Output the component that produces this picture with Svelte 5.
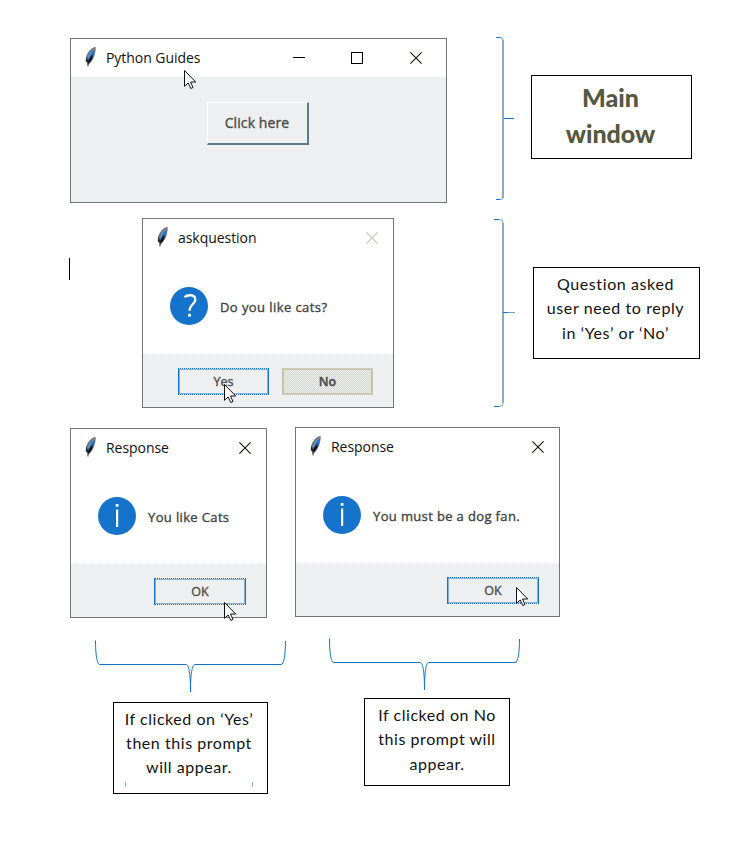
<script>
  const windows = [
    { kind: 'main', title: 'Python Guides', x: 70, y: 38, w: 377, h: 165 },
    { kind: 'ask', title: 'askquestion', x: 142, y: 218, w: 252, h: 190, icon: '?', message: 'Do you like cats?', buttons: ['Yes', 'No'] },
    { kind: 'reply', title: 'Response', x: 70, y: 428, w: 197, h: 190, icon: 'i', message: 'You like Cats', buttons: ['OK'] },
    { kind: 'reply', title: 'Response', x: 295, y: 427, w: 265, h: 190, icon: 'i', message: 'You must be a dog fan.', buttons: ['OK'] }
  ];

  const notes = [
    { kind: 'heading', x: 531, y: 75, w: 161, h: 84, lines: ['Main', 'window'] },
    { kind: 'tall', x: 533, y: 267, w: 167, h: 92, lines: ['Question asked', 'user need to reply', 'in ‘Yes’ or ‘No’'] },
    { kind: 'ticks', x: 113, y: 702, w: 155, h: 92, lines: ['If clicked on ‘Yes’', 'then this prompt', 'will appear.'] },
    { kind: 'plain', x: 364, y: 698, w: 146, h: 88, lines: ['If clicked on No', 'this prompt will', 'appear.'] }
  ];

  const cursors = [[184, 70], [224, 384], [224, 602], [516, 587]];

  const box = (o) => `left:${o.x}px;top:${o.y}px;width:${o.w}px;height:${o.h}px`;
</script>

<main class="canvas">
  {#each windows as win}
    <section class="window {win.kind}" style={box(win)}>
      <header>
        <svg class="feather" width="14" height="20" viewBox="0 0 14 20">
          <path d="M11.500 0C7.500 .5 3.500 5 2.300 9.500L1.500 14L3 16L3.300 19.500L4.500 19.500L5 17C9 14 11.500 7.500 11.700 1Z" fill="#707173" />
          <path d="M10.200 2.500C7 4.500 4.500 8.500 4 13L6.500 13L9 9L10.200 5.500Z" fill="#1976d2" />
          <path d="M8.500 7.500L6.500 10L4.500 13L4 17.500L6 15L8.500 11Z" fill="#050c16" />
          <path d="M2.700 9L2 13.500L4 16L5 13L3.600 13Z" fill="#17222d" />
          <path d="M10.300 1.500L6.500 6L4.200 11" stroke="#8db4d8" stroke-width=".7" fill="none" />
        </svg>
        <span class="title">{win.title}</span>
        <div class="controls">
          {#if win.kind === 'main'}
            <svg class="minimize" width="12" height="12"><path d="M0 5.500H12" stroke="#000" /></svg>
            <svg width="12" height="12"><rect x=".5" y=".5" width="11" height="11" fill="none" stroke="#000" /></svg>
          {/if}
          <svg width="12" height="12"><path class="cross" d="M.4 .4L11.600 11.600M11.600 .4L.4 11.600" /></svg>
        </div>
      </header>
      {#if win.kind === 'main'}
        <div class="body"><button class="raised">Click here</button></div>
      {:else}
        <div class="message">
          <span class="badge">
            <svg width="38" height="38" viewBox="0 0 38 38">
              <circle cx="19" cy="19" r="19" fill="#1573cc" />
              {#if win.icon === 'i'}
                <path d="M17.700 7H20.500V9.700H17.700ZM18 12.500H20.200V30H18Z" fill="#fff" />
              {:else}
                <path d="M14.500 10.300C16.500 8 25.300 6.300 25.300 12.700C25.300 17.300 19.500 17.500 19.500 23.800" stroke="#fff" stroke-width="2.300" fill="none" />
                <path d="M18.100 26.800H21V29.600H18.100Z" fill="#fff" />
              {/if}
            </svg>
          </span>
          <span class="words">{win.message}</span>
        </div>
        <footer>
          {#each win.buttons as label}
            <button class="choice" class:muted={label === 'No'}>{label}</button>
          {/each}
        </footer>
      {/if}
    </section>
  {/each}

  {#each notes as note}
    <aside class="note {note.kind}" style={box(note)}>
      {#each note.lines as line}<span>{line}</span>{/each}
      {#if note.kind === 'ticks'}<i></i>{/if}
    </aside>
  {/each}

  <svg class="braces" width="738" height="842" viewBox="0 0 738 842" fill="none">
    <g stroke="#86add0" stroke-width="2">
      <path d="M503 40V198M503 223V403" />
    </g>
    <g stroke="#1573c5">
      <path d="M496 37.500H500M496 199.500H500M504 118.500H514" />
      <path d="M494 219.500H499M494 406.500H499M503 312.500H508" />
      <path d="M95.500 640.500C95.500 654 97 664.500 99.500 664.500H186C189 664.500 190.500 674 190.500 692C190.500 674 192 664.500 195 664.500H281C284 664.500 285.500 654 285.500 641" />
      <path d="M329.500 638.500C329.500 652 331 662.500 333.500 662.500H420C423 662.500 424.500 672 424.500 690C424.500 672 426 662.500 429 662.500H515C518 662.500 519.500 652 519.500 639" />
    </g>
    <path d="M500 37.500Q503 37.500 503 40M500 199.500Q503 199.500 503 197M499 219.500Q503 219.500 503 223M499 406.500Q503 406.500 503 403M508 312.500H515" stroke="#68a0d2" />
    <path d="M69.500 258V280" stroke="#000" />
  </svg>

  {#each cursors as [x, y]}
    <svg class="cursor" style="left:{x}px;top:{y}px" width="13" height="20" viewBox="0 0 13 20">
      <path d="M.5 .5V16.300L4.200 13L6.800 18.500L9 17.500L6.500 12H11.700Z" fill="#fff" stroke="#111" />
    </svg>
  {/each}
</main>

<style>
  :global(body) { margin: 0; background: #fff; }
  * { box-sizing: border-box; }
  .canvas { position: relative; width: 738px; height: 842px; overflow: hidden; background: #fff; font-family: "Open Sans", "Noto Sans", sans-serif; }
  .window { position: absolute; display: flex; flex-direction: column; border: 1px solid #737475; background: #fff; }
  header { display: flex; align-items: center; flex: none; height: 38px; padding: 0 24px 0 13px; }
  .reply header, .ask header { padding-right: 15px; }
  .feather { flex: none; margin-top: -2px; }
  .title { margin: -1px 0 0 8px; font-size: 14px; line-height: 19px; letter-spacing: -.05px; white-space: nowrap; color: #111; }
  .controls { display: flex; gap: 47px; margin: -1px 0 0 auto; }
  .controls svg { display: block; }
  .controls .minimize { margin-right: -1px; }
  .cross { stroke: #171006; stroke-width: 1.100; }
  .ask .cross { stroke: #c5c0ab; }
  .body { flex: 1; display: flex; justify-content: center; align-items: flex-start; padding: 25px 2px 0 0; background: #eeeff1; }
  button { font-family: inherit; margin: 0; padding: 0; border-radius: 0; color: #484b48; -webkit-text-stroke: .35px; white-space: nowrap; }
  .raised { width: 102px; height: 43px; padding-bottom: 2px; background: #eeeff1; border: solid; border-width: 1px 2px 2px 1px; border-color: #fff #5a7894 #5a7894 #fff; font-size: 14px; letter-spacing: .1px; }
  .message { flex: 1; display: flex; align-items: flex-start; padding: 30px 0 0 27px; }
  .badge svg { display: block; }
  .words { margin: 11px 0 0 12px; font-size: 13px; line-height: 18px; letter-spacing: .42px; color: #40433f; -webkit-text-stroke: .35px; white-space: nowrap; }
  .reply .words { letter-spacing: .36px; }
  footer { display: flex; justify-content: flex-end; gap: 12px; flex: none; height: 53px; padding: 13px 20px 0 0; background: #eeeff1; background-clip: padding-box; border-top: 1px dotted #e3e5e6; }
  .ask footer { gap: 13px; }
  .choice { width: 92px; height: 27px; border: 1px solid #1573c5; border-style: dotted solid; outline: 1px solid #86b0d8; outline-offset: -2px; background: #eeeff1; font-size: 12.500px; line-height: 20px; }
  .ask .choice { width: 91px; }
  .muted { border-color: #c9c1a8; outline-color: #c9c1a8; font-weight: 600; background: conic-gradient(#d5d5cf 25%, #eeeff1 0 50%, #d5d5cf 0 75%, #eeeff1 0) 0 0 / 2px 2px; }
  .note { position: absolute; display: flex; flex-direction: column; align-items: center; border: 1px solid #000; background: #fff; padding-top: 4px; color: #111; font: 16px/24.400px Lato, sans-serif; letter-spacing: .55px; white-space: nowrap; }
  .note.tall { padding-right: 2px; letter-spacing: .6px; }
  .note.ticks { padding-right: 3px; line-height: 24px; }
  .note.heading { padding: 3px 2px 0 0; font-size: 25px; line-height: 36px; font-weight: 900; letter-spacing: 0; color: #55573f; }
  .note i { flex: none; width: 128px; height: 5px; margin-top: 3px; border: solid #86add0; border-width: 0 1px; }
  .braces { position: absolute; inset: 0; pointer-events: none; }
  .cursor { position: absolute; }
</style>
